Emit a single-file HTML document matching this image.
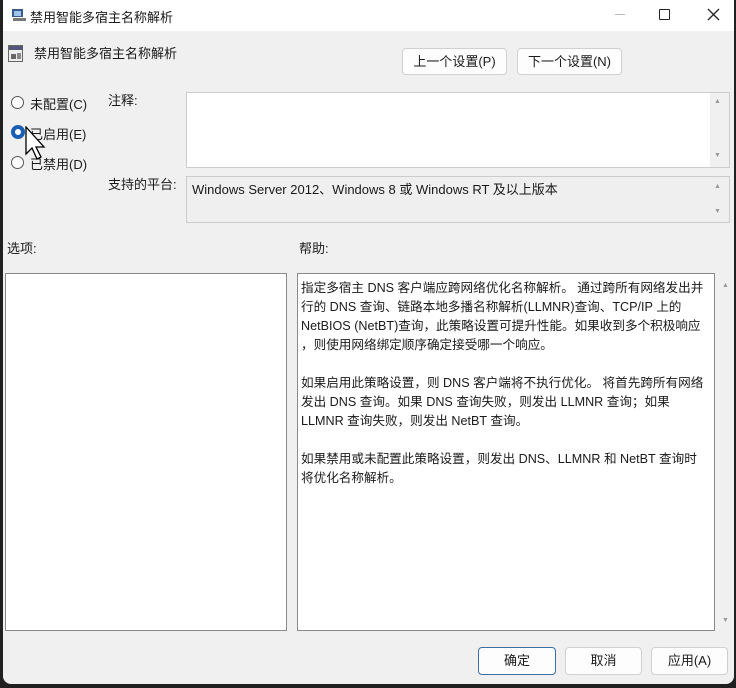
<!DOCTYPE html>
<html><head><meta charset="utf-8"><style>
*{margin:0;padding:0;box-sizing:border-box}
body{width:736px;height:688px;background:#202020;position:relative;overflow:hidden;font-family:"Liberation Sans","Noto Sans CJK SC",sans-serif;font-size:13px;color:#1a1a1a}
.win{position:absolute;left:3px;top:0;width:731px;height:684px;background:#f0f0f0;border-radius:0 0 8px 8px}
.title{position:absolute;left:0;top:0;width:100%;height:31px;background:#fff}
.a{position:absolute;white-space:nowrap}
.btn{position:absolute;background:#fdfdfd;border:1px solid #d0d0d0;border-radius:4px;text-align:center;font-size:13px}
.box{position:absolute;border:1px solid #a0a0a0;background:#fff}
.radio{position:absolute;width:13px;height:13px;border:1px solid #555;border-radius:50%;background:#fff}
.help{position:absolute;left:294px;top:273px;width:418px;height:358px;border:1px solid #8a8a8a;background:#fff;padding:5px 3px;line-height:19px;font-size:12.6px}
.tri{position:absolute;font-size:7px;color:#999}
</style></head><body>
<div class="win">
<div class="title">
 <svg class="a" style="left:8px;top:7px" width="16" height="16"><rect x="1" y="2" width="11" height="8" fill="#3a5a8a"/><rect x="3" y="4" width="7" height="5" fill="#9ec5ee"/><rect x="2" y="11" width="13" height="3" fill="#777"/></svg>
 <div class="a" style="left:27px;top:7px;font-size:13px">禁用智能多宿主名称解析</div>
 <div class="a" style="left:612px;top:14px;width:10px;height:1px;background:#bbb"></div>
 <div class="a" style="left:656px;top:9px;width:11px;height:11px;border:1.3px solid #222;border-radius:1px"></div>
 <svg class="a" style="left:704px;top:8px" width="13" height="13"><path d="M1 1L12 12M12 1L1 12" stroke="#222" stroke-width="1.3"/></svg>
</div>
<svg class="a" style="left:5px;top:45px" width="16" height="18"><rect x="0.5" y="0.5" width="14" height="16" fill="#eee" stroke="#666"/><rect x="1" y="1" width="14" height="4" fill="#557"/><rect x="3" y="9" width="5" height="5" fill="#666"/><rect x="9" y="8" width="4" height="6" fill="#888"/></svg>
<div class="a" style="left:31px;top:43px">禁用智能多宿主名称解析</div>
<div class="btn" style="left:399px;top:48px;width:105px;height:27px;line-height:25px">上一个设置(P)</div>
<div class="btn" style="left:514px;top:48px;width:105px;height:27px;line-height:25px">下一个设置(N)</div>

<div class="radio" style="left:8px;top:96px"></div><div class="a" style="left:27px;top:94px">未配置(C)</div>
<div class="radio" style="left:8px;top:125px;width:14px;height:14px;border:4px solid #1a5fb4"></div><div class="a" style="left:27px;top:124px">已启用(E)</div>
<div class="radio" style="left:8px;top:156px"></div><div class="a" style="left:27px;top:154px">已禁用(D)</div>
<svg class="a" style="left:21px;top:126px" width="26" height="36"><path d="M2 1L2 28L8 22L13 33L17 31L12 21L20 21Z" fill="#fff" stroke="#000" stroke-width="1.3"/></svg>

<div class="a" style="left:105px;top:90px">注释:</div>
<div class="box" style="left:183px;top:92px;width:544px;height:76px;border-color:#ccc"></div>
<div class="a" style="left:707px;top:93px;width:19px;height:74px;background:#f0f0f0"></div>
<div class="tri" style="left:711px;top:98px">▲</div><div class="tri" style="left:711px;top:152px">▼</div>
<div class="a" style="left:105px;top:174px">支持的平台:</div>
<div class="box" style="left:183px;top:176px;width:544px;height:47px;background:#efefef;border-color:#ccc"></div>
<div class="a" style="left:189px;top:179px">Windows Server 2012、Windows 8 或 Windows RT 及以上版本</div>
<div class="tri" style="left:711px;top:183px">▲</div><div class="tri" style="left:711px;top:208px">▼</div>

<div class="a" style="left:4px;top:238px">选项:</div>
<div class="a" style="left:296px;top:238px">帮助:</div>
<div class="box" style="left:2px;top:273px;width:282px;height:358px;border-color:#8a8a8a"></div>
<div class="help">指定多宿主 DNS 客户端应跨网络优化名称解析。 通过跨所有网络发出并<br>行的 DNS 查询、链路本地多播名称解析(LLMNR)查询、TCP/IP 上的<br>NetBIOS (NetBT)查询，此策略设置可提升性能。如果收到多个积极响应<br>，则使用网络绑定顺序确定接受哪一个响应。<br><br>如果启用此策略设置，则 DNS 客户端将不执行优化。 将首先跨所有网络<br>发出 DNS 查询。如果 DNS 查询失败，则发出 LLMNR 查询；如果<br>LLMNR 查询失败，则发出 NetBT 查询。<br><br>如果禁用或未配置此策略设置，则发出 DNS、LLMNR 和 NetBT 查询时<br>将优化名称解析。</div>
<div class="tri" style="left:719px;top:282px">▲</div><div class="tri" style="left:719px;top:617px">▼</div>

<div class="btn" style="left:475px;top:647px;width:78px;height:28px;line-height:26px;border:1.5px solid #3b6ea5">确定</div>
<div class="btn" style="left:562px;top:647px;width:77px;height:28px;line-height:26px">取消</div>
<div class="btn" style="left:648px;top:647px;width:77px;height:28px;line-height:26px">应用(A)</div>
</div>
</body></html>
